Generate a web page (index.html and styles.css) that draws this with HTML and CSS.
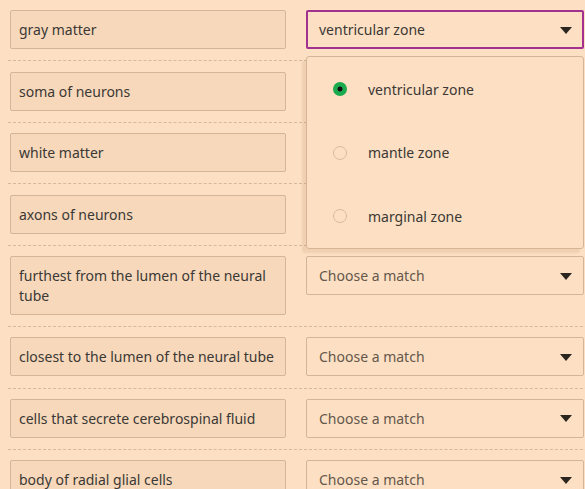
FILE: index.html
```html
<!DOCTYPE html>
<html>
<head>
<meta charset="utf-8">
<link rel="stylesheet" href="styles.css">
</head>
<body>
<div class="list">
  <div class="row">
    <div class="term">gray matter</div>
    <div class="slot">
      <div class="select active"><span class="value">ventricular zone</span><span class="caret"></span></div>
      <div class="menu">
        <div class="option"><span class="radio checked"></span><span>ventricular zone</span></div>
        <div class="option"><span class="radio"></span><span>mantle zone</span></div>
        <div class="option"><span class="radio"></span><span>marginal zone</span></div>
      </div>
    </div>
  </div>
  <div class="row">
    <div class="term">soma of neurons</div>
    <div class="slot"></div>
  </div>
  <div class="row">
    <div class="term">white matter</div>
    <div class="slot"></div>
  </div>
  <div class="row">
    <div class="term">axons of neurons</div>
    <div class="slot"></div>
  </div>
  <div class="row">
    <div class="term">furthest from the lumen of the neural tube</div>
    <div class="slot"><div class="select"><span class="placeholder">Choose a match</span><span class="caret"></span></div></div>
  </div>
  <div class="row">
    <div class="term">closest to the lumen of the neural tube</div>
    <div class="slot"><div class="select"><span class="placeholder">Choose a match</span><span class="caret"></span></div></div>
  </div>
  <div class="row">
    <div class="term">cells that secrete cerebrospinal fluid</div>
    <div class="slot"><div class="select"><span class="placeholder">Choose a match</span><span class="caret"></span></div></div>
  </div>
  <div class="row">
    <div class="term">body of radial glial cells</div>
    <div class="slot"><div class="select"><span class="placeholder">Choose a match</span><span class="caret"></span></div></div>
  </div>
</div>
</body>
</html>
```

FILE: styles.css
```css
html, body {
  margin: 0;
  padding: 0;
  background: #fde0c3;
  overflow: hidden;
}
body {
  font-family: "Noto Sans", "Open Sans", sans-serif;
  font-size: 14px;
  color: #3b3835;
  width: 585px;
  height: 489px;
}
.list {
  margin-left: 8px;
  width: 600px;
}
.row {
  display: grid;
  grid-template-columns: 276px 278px;
  column-gap: 20px;
  align-items: start;
  padding: 10.25px 0 11.2px 2px;
  border-bottom: 1px dashed #d7b89c;
}
.term {
  background: #f7d8bb;
  border: 1px solid #d5b598;
  border-radius: 2px;
  padding: 9px 8px 8px 8px;
  line-height: 20px;
}
.slot {
  position: relative;
}
.select {
  display: flex;
  align-items: center;
  justify-content: space-between;
  border: 1px solid #d5b598;
  border-radius: 2px;
  height: 37px;
  padding: 0 11px 0 12px;
  background: #fde0c3;
}
.select.active {
  border: 2px solid #a3318f;
  padding: 0 10px 0 11px;
  height: 35px;
}
.placeholder {
  color: #64574c;
}
.caret {
  width: 0;
  height: 0;
  border-left: 6px solid transparent;
  border-right: 6px solid transparent;
  border-top: 7px solid #2b2520;
  margin-top: 1px;
}
.menu {
  position: absolute;
  top: 46px;
  left: 0;
  width: 276px;
  background: #fde0c3;
  border: 1px solid #d5b598;
  border-radius: 3px;
  box-shadow: -4px 4px 2px rgba(150, 100, 50, 0.12);
  z-index: 2;
}
.option {
  display: flex;
  align-items: center;
  height: 63.6px;
  padding-left: 26px;
}
.radio {
  width: 12px;
  height: 12px;
  border: 1px solid #d9bba0;
  border-radius: 50%;
  margin-right: 21px;
  box-sizing: content-box;
  flex: none;
}
.radio.checked {
  width: 14px;
  height: 14px;
  border: none;
  background: radial-gradient(circle, #111 0 2.2px, #1aa94d 2.8px);
}
```
